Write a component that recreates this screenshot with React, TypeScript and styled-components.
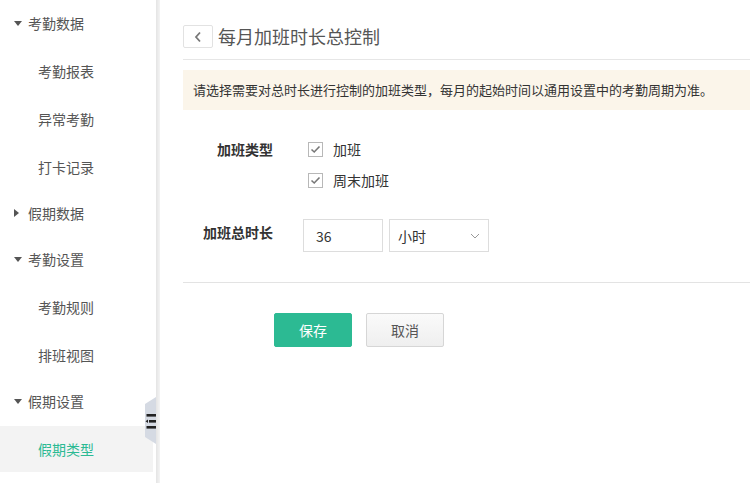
import React from 'react';
import styled, { createGlobalStyle } from 'styled-components';

const GlobalStyle = createGlobalStyle`
  html, body {
    margin: 0;
    padding: 0;
    background: #fff;
  }
  body {
    font-family: "Noto Sans CJK SC", "Noto Sans", sans-serif;
    font-size: 14px;
    color: #333;
  }
`;

const Page = styled.div`
  display: flex;
  width: 750px;
  height: 483px;
  overflow: hidden;
`;

const Sidebar = styled.div`
  position: relative;
  flex: 0 0 160px;
  background: linear-gradient(to right, #fff 156px, #e4e4e4 156px, #f4f4f4 160px);
`;

const NavList = styled.ul`
  list-style: none;
  margin: 0;
  padding: 0;
`;

const GroupRow = styled.li`
  display: flex;
  align-items: center;
  height: 46px;
  padding-left: 14px;
  color: #555;
`;

const Caret = styled.span<{ $open?: boolean }>`
  display: inline-block;
  width: 0;
  height: 0;
  margin-right: ${({ $open }) => ($open ? '6px' : '9px')};
  ${({ $open }) =>
    $open
      ? `border-left: 4px solid transparent;
         border-right: 4px solid transparent;
         border-top: 5px solid #555;`
      : `border-top: 4px solid transparent;
         border-bottom: 4px solid transparent;
         border-left: 5px solid #555;`}
`;

const ItemRow = styled.li<{ $active?: boolean }>`
  display: flex;
  align-items: center;
  height: 46px;
  margin-top: 2px;
  width: 153px;
  padding-left: 38px;
  box-sizing: border-box;
  color: ${({ $active }) => ($active ? '#2cba93' : '#555')};
  background: ${({ $active }) => ($active ? '#f3f3f3' : 'transparent')};
`;

const CollapseTab = styled.div`
  position: absolute;
  left: 145px;
  top: 397px;
  width: 11px;
  height: 47px;
  background: #d5dae3;
  clip-path: polygon(0 7px, 100% 0, 100% 100%, 0 calc(100% - 7px));
  display: flex;
  align-items: center;
  justify-content: flex-end;
`;

const Main = styled.div`
  flex: 1;
  padding: 25px 0 0 23px;
`;

const Header = styled.div`
  display: flex;
  align-items: center;
  padding-bottom: 11px;
  border-bottom: 1px solid #e6e6e6;
`;

const BackButton = styled.button`
  display: flex;
  align-items: center;
  justify-content: center;
  width: 30px;
  height: 23px;
  padding: 0;
  margin-right: 5px;
  border: 1px solid #e2e2e2;
  border-radius: 2px;
  background: #fff;
  box-sizing: border-box;
`;

const Title = styled.h1`
  margin: 0;
  font-size: 18px;
  font-weight: normal;
  line-height: 23px;
  color: #555;
`;

const Notice = styled.div`
  margin-top: 10px;
  height: 40px;
  line-height: 40px;
  padding-left: 10px;
  background: #fbf5ea;
  font-size: 13px;
  color: #333;
  white-space: nowrap;
`;

const Form = styled.div`
  padding-top: 29px;
`;

const FormRow = styled.div<{ $gap?: number }>`
  display: flex;
  align-items: flex-start;
  margin-top: ${({ $gap }) => $gap ?? 0}px;
`;

const Label = styled.div<{ $lh?: number }>`
  width: 90px;
  text-align: right;
  font-weight: bold;
  color: #333;
  line-height: ${({ $lh }) => $lh ?? 20}px;
  margin-right: 30px;
  white-space: nowrap;
`;

const CheckList = styled.div`
  display: flex;
  flex-direction: column;
  gap: 11px;
  padding-left: 5px;
`;

const CheckLine = styled.label`
  display: flex;
  align-items: center;
  height: 20px;
  color: #333;
`;

const Box = styled.span`
  display: flex;
  align-items: center;
  justify-content: center;
  width: 15px;
  height: 15px;
  margin-right: 10px;
  border: 1px solid #b8b8b8;
  box-sizing: border-box;
  background: #fff;
`;

const Field = styled.div`
  display: flex;
  gap: 6px;
`;

const TextInput = styled.input`
  width: 80px;
  height: 33px;
  box-sizing: border-box;
  border: 1px solid #ddd;
  padding: 0 12px;
  font-family: inherit;
  font-size: 14px;
  color: #333;
  outline: none;
`;

const Select = styled.div`
  display: flex;
  align-items: center;
  justify-content: space-between;
  width: 100px;
  height: 33px;
  box-sizing: border-box;
  border: 1px solid #ddd;
  padding: 0 8px 0 8px;
  color: #333;
`;

const Divider = styled.div`
  margin-top: 30px;
  border-top: 1px solid #e3e3e3;
`;

const Actions = styled.div`
  display: flex;
  gap: 14px;
  padding: 30px 0 0 91px;
`;

const Button = styled.button<{ $primary?: boolean }>`
  width: 78px;
  height: 34px;
  border-radius: 2px;
  font-family: inherit;
  font-size: 14px;
  cursor: pointer;
  border: 1px solid ${({ $primary }) => ($primary ? '#2cba93' : '#d6d6d6')};
  background: ${({ $primary }) =>
    $primary ? '#2cba93' : 'linear-gradient(#fafafa, #efefef)'};
  color: ${({ $primary }) => ($primary ? '#fff' : '#555')};
`;

const CheckIcon = () => (
  <svg width="11" height="9" viewBox="0 0 11 9">
    <path d="M1.5 4.5 L4.2 7 L9.5 1.5" fill="none" stroke="#777" strokeWidth="1.6" />
  </svg>
);

const CollapseIcon = () => (
  <svg width="11" height="16" viewBox="0 0 11 16">
    <rect x="1.5" y="1" width="9.5" height="2.6" fill="#222" />
    <rect x="4" y="7" width="7" height="2.6" fill="#222" />
    <path d="M0.5 8.3 L3 6.6 L3 10 Z" fill="#222" />
    <rect x="1.5" y="13" width="9.5" height="2.6" fill="#222" />
  </svg>
);

type NavEntry = { label: string; group?: boolean; open?: boolean; active?: boolean };

const nav: NavEntry[] = [
  { label: '考勤数据', group: true, open: true },
  { label: '考勤报表' },
  { label: '异常考勤' },
  { label: '打卡记录' },
  { label: '假期数据', group: true },
  { label: '考勤设置', group: true, open: true },
  { label: '考勤规则' },
  { label: '排班视图' },
  { label: '假期设置', group: true, open: true },
  { label: '假期类型', active: true },
];

export default function App() {
  return (
    <>
      <GlobalStyle />
      <Page>
        <Sidebar>
          <NavList>
            {nav.map((n) =>
              n.group ? (
                <GroupRow key={n.label}>
                  <Caret $open={n.open} />
                  {n.label}
                </GroupRow>
              ) : (
                <ItemRow key={n.label} $active={n.active}>
                  {n.label}
                </ItemRow>
              )
            )}
          </NavList>
          <CollapseTab>
            <CollapseIcon />
          </CollapseTab>
        </Sidebar>
        <Main>
          <Header>
            <BackButton>
              <svg width="8" height="12" viewBox="0 0 8 12">
                <path d="M6 1.5 L2 6 L6 10.5" fill="none" stroke="#777" strokeWidth="1.8" />
              </svg>
            </BackButton>
            <Title>每月加班时长总控制</Title>
          </Header>
          <Notice>请选择需要对总时长进行控制的加班类型，每月的起始时间以通用设置中的考勤周期为准。</Notice>
          <Form>
            <FormRow>
              <Label>加班类型</Label>
              <CheckList>
                <CheckLine>
                  <Box>
                    <CheckIcon />
                  </Box>
                  加班
                </CheckLine>
                <CheckLine>
                  <Box>
                    <CheckIcon />
                  </Box>
                  周末加班
                </CheckLine>
              </CheckList>
            </FormRow>
            <FormRow $gap={29}>
              <Label $lh={26}>加班总时长</Label>
              <Field>
                <TextInput defaultValue="36" />
                <Select>
                  <span>小时</span>
                  <svg width="10" height="6" viewBox="0 0 10 6">
                    <path d="M1 1 L5 5 L9 1" fill="none" stroke="#999" strokeWidth="1" />
                  </svg>
                </Select>
              </Field>
            </FormRow>
          </Form>
          <Divider />
          <Actions>
            <Button $primary>保存</Button>
            <Button>取消</Button>
          </Actions>
        </Main>
      </Page>
    </>
  );
}
